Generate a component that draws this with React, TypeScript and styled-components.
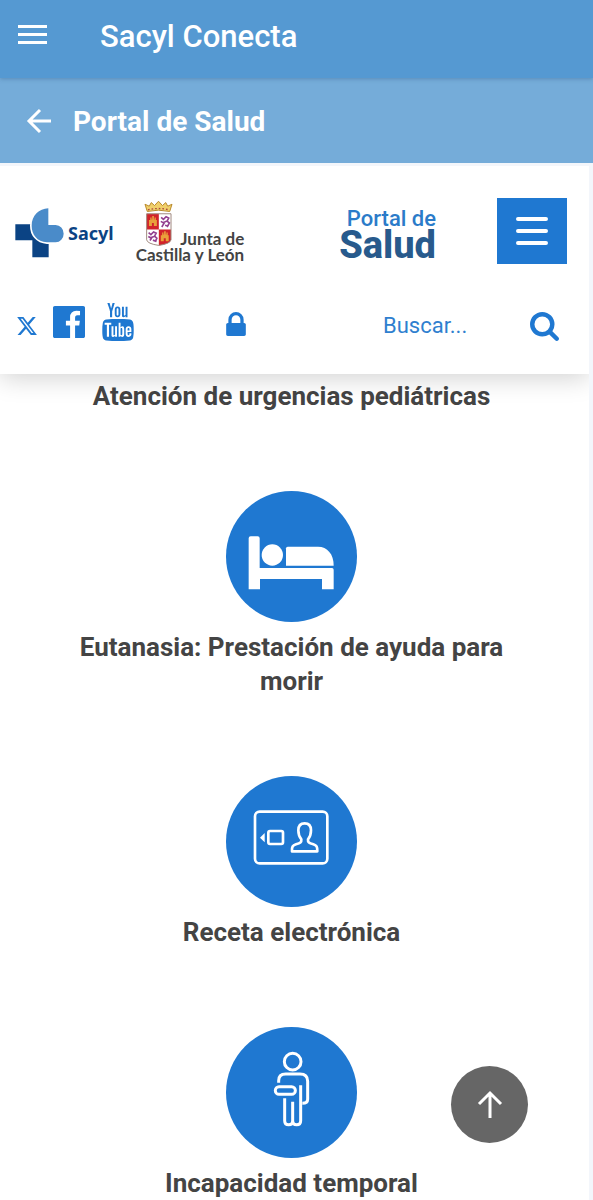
import React from "react";
import styled, { createGlobalStyle } from "styled-components";
import { FaXTwitter } from "react-icons/fa6";
import { TfiYoutube } from "react-icons/tfi";

const GlobalStyle = createGlobalStyle`
  * { box-sizing: border-box; }
  body {
    margin: 0;
    font-family: Roboto, "Liberation Sans", sans-serif;
    background: #f3f6fb;
  }
  button { border: 0; padding: 0; background: none; cursor: pointer; font: inherit; }
  h1, h2, p, ul { margin: 0; padding: 0; }
  svg { display: block; }
`;

const Shell = styled.div`
  position: relative;
  display: flex;
  flex-direction: column;
  height: 100vh;
`;

const AppBar = styled.header`
  position: relative;
  z-index: 3;
  flex: none;
  display: flex;
  align-items: center;
  gap: 53px;
  height: 78px;
  padding: 0 18px 6px;
  color: #fff;
  background: #5599d2;
  box-shadow: 0 1px 4px rgba(40, 80, 120, 0.35);
`;

const AppTitle = styled.h1`
  padding-top: 2px;
  font-size: 31px;
  font-weight: 500;
  line-height: 40px;
`;

const SubBar = styled.div`
  flex: none;
  display: flex;
  align-items: center;
  gap: 20px;
  height: 85px;
  padding: 0 25px;
  color: #fff;
  background: #75acd9;
`;

const SubTitle = styled.h2`
  padding-top: 2px;
  font-size: 28px;
  font-weight: 700;
  line-height: 36px;
`;

const IconButton = styled.button`
  color: inherit;
`;

const Portal = styled.div`
  flex: 1;
  min-height: 0;
  display: flex;
  flex-direction: column;
  margin: 3px 4px 0 0;
  overflow: hidden;
  background: #fff;
`;

const PortalHeader = styled.header`
  position: relative;
  z-index: 2;
  flex: none;
  display: flex;
  flex-direction: column;
  gap: 38px;
  padding: 32px 22px 32px 15px;
  background: #fff;
  box-shadow: 0 4px 24px rgba(0, 0, 0, 0.18);
`;

const Row = styled.div`
  display: flex;
  align-items: center;
`;

const SacylLink = styled.a`
  display: flex;
  align-items: center;
  gap: 4px;
  margin: 4px 22px 0 0;
  color: #0b4384;
  font: 700 18px/24px "Noto Sans", sans-serif;
  text-decoration: none;
`;

const JuntaLink = styled.a`
  display: flex;
  flex-direction: column;
  color: #444;
  font: 700 17px/16px Lato, sans-serif;
  text-decoration: none;
`;

const JuntaTop = styled.span`
  display: flex;
  align-items: flex-end;
  justify-content: space-between;
  padding-left: 8px;
`;

const PortalLink = styled.a`
  display: flex;
  flex-direction: column;
  align-items: flex-end;
  margin: 4px 61px 0 auto;
  color: #2b7bc9;
  font-size: 22px;
  font-weight: 500;
  line-height: 24px;
  text-decoration: none;
`;

const PortalStrong = styled.strong`
  color: #285a8c;
  font-size: 38px;
  font-weight: 800;
  line-height: 28px;
`;

const MenuButton = styled.button`
  display: grid;
  place-items: center;
  width: 70px;
  height: 66px;
  color: #fff;
  background: #1f78d1;
`;

const ToolRow = styled(Row)`
  height: 40px;
  color: #1f78d1;
`;

const Social = styled.nav`
  display: flex;
  align-items: center;
  gap: 14px;
`;

const ToolLink = styled.a`
  color: inherit;
`;

const XLink = styled(ToolLink)`
  padding: 8px 1px 0;
`;

const LockLink = styled(ToolLink)`
  margin: 0 auto 0 89px;
  padding-top: 4px;
`;

const SearchForm = styled.form`
  display: flex;
  align-items: center;
  padding: 8px 8px 0 0;
`;

const SearchInput = styled.input`
  width: 147px;
  padding: 0;
  border: 0;
  outline: 0;
  color: inherit;
  background: none;
  font: 400 22px/30px Roboto, sans-serif;
  &::placeholder { color: #2f7fcf; opacity: 1; }
`;

const Services = styled.ul`
  flex: 1;
  min-height: 0;
  display: flex;
  flex-direction: column;
  gap: 78px;
  padding: 5px 6px 0 0;
  overflow-y: auto;
  scrollbar-width: none;
  list-style: none;
`;

const Service = styled.li`
  flex: none;
  display: flex;
  justify-content: center;
`;

const ServiceLink = styled.a`
  display: flex;
  flex-direction: column;
  align-items: center;
  gap: 8px;
  max-width: 460px;
  color: #444;
  font-size: 26px;
  font-weight: 700;
  line-height: 34px;
  text-align: center;
  text-decoration: none;
`;

const Disc = styled.span`
  width: 131px;
  height: 131px;
  border-radius: 50%;
  color: #fff;
  background: #1f78d1;
`;

const TopButton = styled.button`
  position: absolute;
  z-index: 4;
  right: 65px;
  bottom: 57px;
  display: grid;
  place-items: center;
  width: 77px;
  height: 77px;
  border-radius: 50%;
  color: #fff;
  background: #666;
`;

const SacylMark = () => (
  <svg width="49" height="50" viewBox="46 54 147 148" aria-hidden="true">
    <path fill="#0b4384" d="M47 102H147V201H98V150H47Z" />
    <path
      fill="#4a8bc9"
      stroke="#fff"
      strokeWidth="10"
      paintOrder="stroke"
      d="M146 54V104H168A24 26 0 0 1 168 156H142C112 154 96 132 96 106C96 76 118 55 146 54Z"
    />
  </svg>
);

const Crest = () => (
  <svg width="29" height="47" viewBox="56 31 88 139" aria-hidden="true">
    <path
      fill="#f0cf6a"
      stroke="#b98a2c"
      strokeWidth="3"
      d="M66 64L59 42L72 48L78 37L88 46L100 33L112 46L122 37L128 48L141 42L134 64Q100 56 66 64Z"
    />
    <path stroke="#a8483a" strokeWidth="4" strokeDasharray="5 6" d="M68 59Q100 51 132 59" fill="none" />
    <path fill="#fff" d="M64 71H138V150Q136 162 101 167Q66 162 64 150Z" />
    <path fill="#d2232a" d="M64 71H101V119H64Z M101 119H138V150Q136 163 101 167Z" />
    <path fill="none" stroke="#a08a80" strokeWidth="3" d="M64 71H138V150Q136 162 101 167Q66 162 64 150Z" />
    <g fill="#e9a13b">
      <path d="M71 108V90H75V82H79V88H81V78H86V88H88V82H92V90H95V108H86V99H80V108Z" />
      <path d="M107 154V136H111V128H115V134H117V124H122V134H124V128H128V136H131V154H122V145H116V154Z" />
    </g>
    <g fill="none" stroke="#93408f" strokeWidth="5">
      <path d="M108 82L115 88L123 80L131 84L126 93L133 99L126 111M124 94L114 98L107 94M118 98L110 111M130 109L120 106" />
      <path d="M70 128L77 134L85 126L93 130L88 139L95 145L90 156M86 140L76 144L69 140M80 144L74 152M94 155L83 151" />
    </g>
  </svg>
);

const FacebookIcon = () => (
  <svg width="32" height="32" viewBox="0 128 1536 1536" fill="currentColor" aria-hidden="true">
    <path d="M1451 128q35 0 60 25t25 60v1366q0 35-25 60t-60 25h-391v-595h199l30-232h-229v-148q0-56 23.500-84t91.500-28l122-1v-207q-63-9-178-9-136 0-217.500 80t-81.500 226v171h-200v232h200v595h-735q-35 0-60-25t-25-60v-1366q0-35 25-60t60-25h1366z" />
  </svg>
);

const LockIcon = () => (
  <svg width="20" height="24" viewBox="320 128 1152 1408" fill="currentColor" aria-hidden="true">
    <path d="M640 768h512v-192q0-106-75-181t-181-75-181 75-75 181v192zm832 96v576q0 40-28 68t-68 28h-960q-40 0-68-28t-28-68v-576q0-40 28-68t68-28h32v-192q0-184 132-316t316-132 316 132 132 316v192h32q40 0 68 28t28 68z" />
  </svg>
);

const SearchIcon = () => (
  <svg width="29" height="29" viewBox="64 128 1664 1664" fill="currentColor" aria-hidden="true">
    <path d="M1216 832q0-185-131.500-316.500t-316.500-131.500-316.500 131.500-131.500 316.500 131.500 316.500 316.500 131.500 316.500-131.500 131.500-316.500zm512 832q0 52-38 90t-90 38q-54 0-90-38l-343-342q-179 124-399 124-143 0-273.500-55.500t-225-150-150-225-55.500-273.500 55.500-273.500 150-225 225-150 273.500-55.500 273.500 55.500 225 150 150 225 55.500 273.500q0 220-124 399l343 343q37 37 37 90z" />
  </svg>
);

const BedIcon = () => (
  <svg width="131" height="131" viewBox="18 35 393 393" fill="currentColor" aria-hidden="true">
    <path d="M86 330V177Q86 171 92 171H113Q119 171 119 177V266H336Q341 266 341 271V330H306V299H120V330Z" />
    <circle cx="157" cy="227" r="32" />
    <path d="M198 259V207Q198 202 203 202H294C322 202 341 224 341 259Z" />
  </svg>
);

const CardIcon = () => (
  <svg
    width="131"
    height="131"
    viewBox="18 17 393 393"
    fill="none"
    stroke="currentColor"
    strokeWidth="8"
    strokeLinejoin="round"
    aria-hidden="true"
  >
    <rect x="105" y="124" width="217" height="155" rx="14" />
    <rect x="145" y="182" width="44" height="39" rx="5" />
    <path fill="currentColor" stroke="none" d="M120 202L134 188V216Z" />
    <path d="M216 243C215 229 218 225 228 222C241 218 245 216 244 207C237 199 235 190 235 180C235 166 242 159 254 159C266 159 273 166 273 180C273 190 271 199 264 207C263 216 267 218 280 222C290 225 292 229 292 243Z" />
  </svg>
);

const SlingIcon = () => (
  <svg
    width="131"
    height="131"
    viewBox="18 19 393 393"
    fill="none"
    stroke="currentColor"
    strokeWidth="9"
    strokeLinejoin="round"
    aria-hidden="true"
  >
    <circle cx="218" cy="123" r="25" />
    <path d="M176 186V180Q176 160 197 160H240Q263 160 263 182V236Q263 248 247 248" />
    <rect x="166" y="198" width="60" height="23" rx="11" />
    <path d="M242 194V300Q242 312 230 312Q218 312 218 300V243M218 300Q218 312 206 312Q194 312 194 300V233" />
  </svg>
);

const services = [
  { label: "Atención de urgencias pediátricas", Icon: null },
  { label: "Eutanasia: Prestación de ayuda para morir", Icon: BedIcon },
  { label: "Receta electrónica", Icon: CardIcon },
  { label: "Incapacidad temporal", Icon: SlingIcon },
];

export default function App() {
  return (
    <Shell>
      <GlobalStyle />
      <AppBar>
        <IconButton type="button" aria-label="Abrir menú">
          <svg width="29" height="22" viewBox="0 0 29 22" fill="currentColor">
            <path d="M0 0H29V3H0ZM0 8H29V11H0ZM0 16H29V19H0Z" />
          </svg>
        </IconButton>
        <AppTitle>Sacyl Conecta</AppTitle>
      </AppBar>
      <SubBar>
        <IconButton type="button" aria-label="Volver">
          <svg width="28" height="26" viewBox="0 0 28 26" fill="none" stroke="currentColor" strokeWidth="3">
            <path d="M26 13H4M15 2L4 13L15 24" />
          </svg>
        </IconButton>
        <SubTitle>Portal de Salud</SubTitle>
      </SubBar>
      <Portal>
        <PortalHeader>
          <Row>
            <SacylLink href="#sacyl">
              <SacylMark />
              Sacyl
            </SacylLink>
            <JuntaLink href="#junta">
              <JuntaTop>
                <Crest />
                Junta de
              </JuntaTop>
              Castilla y León
            </JuntaLink>
            <PortalLink href="#inicio">
              Portal de
              <PortalStrong>Salud</PortalStrong>
            </PortalLink>
            <MenuButton type="button" aria-label="Menú del portal">
              <svg width="34" height="32" viewBox="0 0 34 32" stroke="currentColor" strokeWidth="4" strokeLinecap="round">
                <path d="M3 4H31M3 16H31M3 28H31" />
              </svg>
            </MenuButton>
          </Row>
          <ToolRow>
            <Social aria-label="Redes sociales">
              <XLink href="#x" aria-label="X">
                <FaXTwitter size={22} />
              </XLink>
              <ToolLink href="#facebook" aria-label="Facebook">
                <FacebookIcon />
              </ToolLink>
              <ToolLink href="#youtube" aria-label="YouTube">
                <TfiYoutube size={38} />
              </ToolLink>
            </Social>
            <LockLink href="#acceso" aria-label="Acceso privado">
              <LockIcon />
            </LockLink>
            <SearchForm role="search">
              <SearchInput type="text" placeholder="Buscar..." aria-label="Buscar" />
              <IconButton type="submit" aria-label="Buscar">
                <SearchIcon />
              </IconButton>
            </SearchForm>
          </ToolRow>
        </PortalHeader>
        <Services>
          {services.map(({ label, Icon }) => (
            <Service key={label}>
              <ServiceLink href="#servicio">
                {Icon && (
                  <Disc>
                    <Icon />
                  </Disc>
                )}
                {label}
              </ServiceLink>
            </Service>
          ))}
        </Services>
      </Portal>
      <TopButton type="button" aria-label="Volver arriba">
        <svg width="26" height="30" viewBox="0 0 26 30" fill="none" stroke="currentColor" strokeWidth="3">
          <path d="M13 28V3M2 14L13 3L24 14" />
        </svg>
      </TopButton>
    </Shell>
  );
}
